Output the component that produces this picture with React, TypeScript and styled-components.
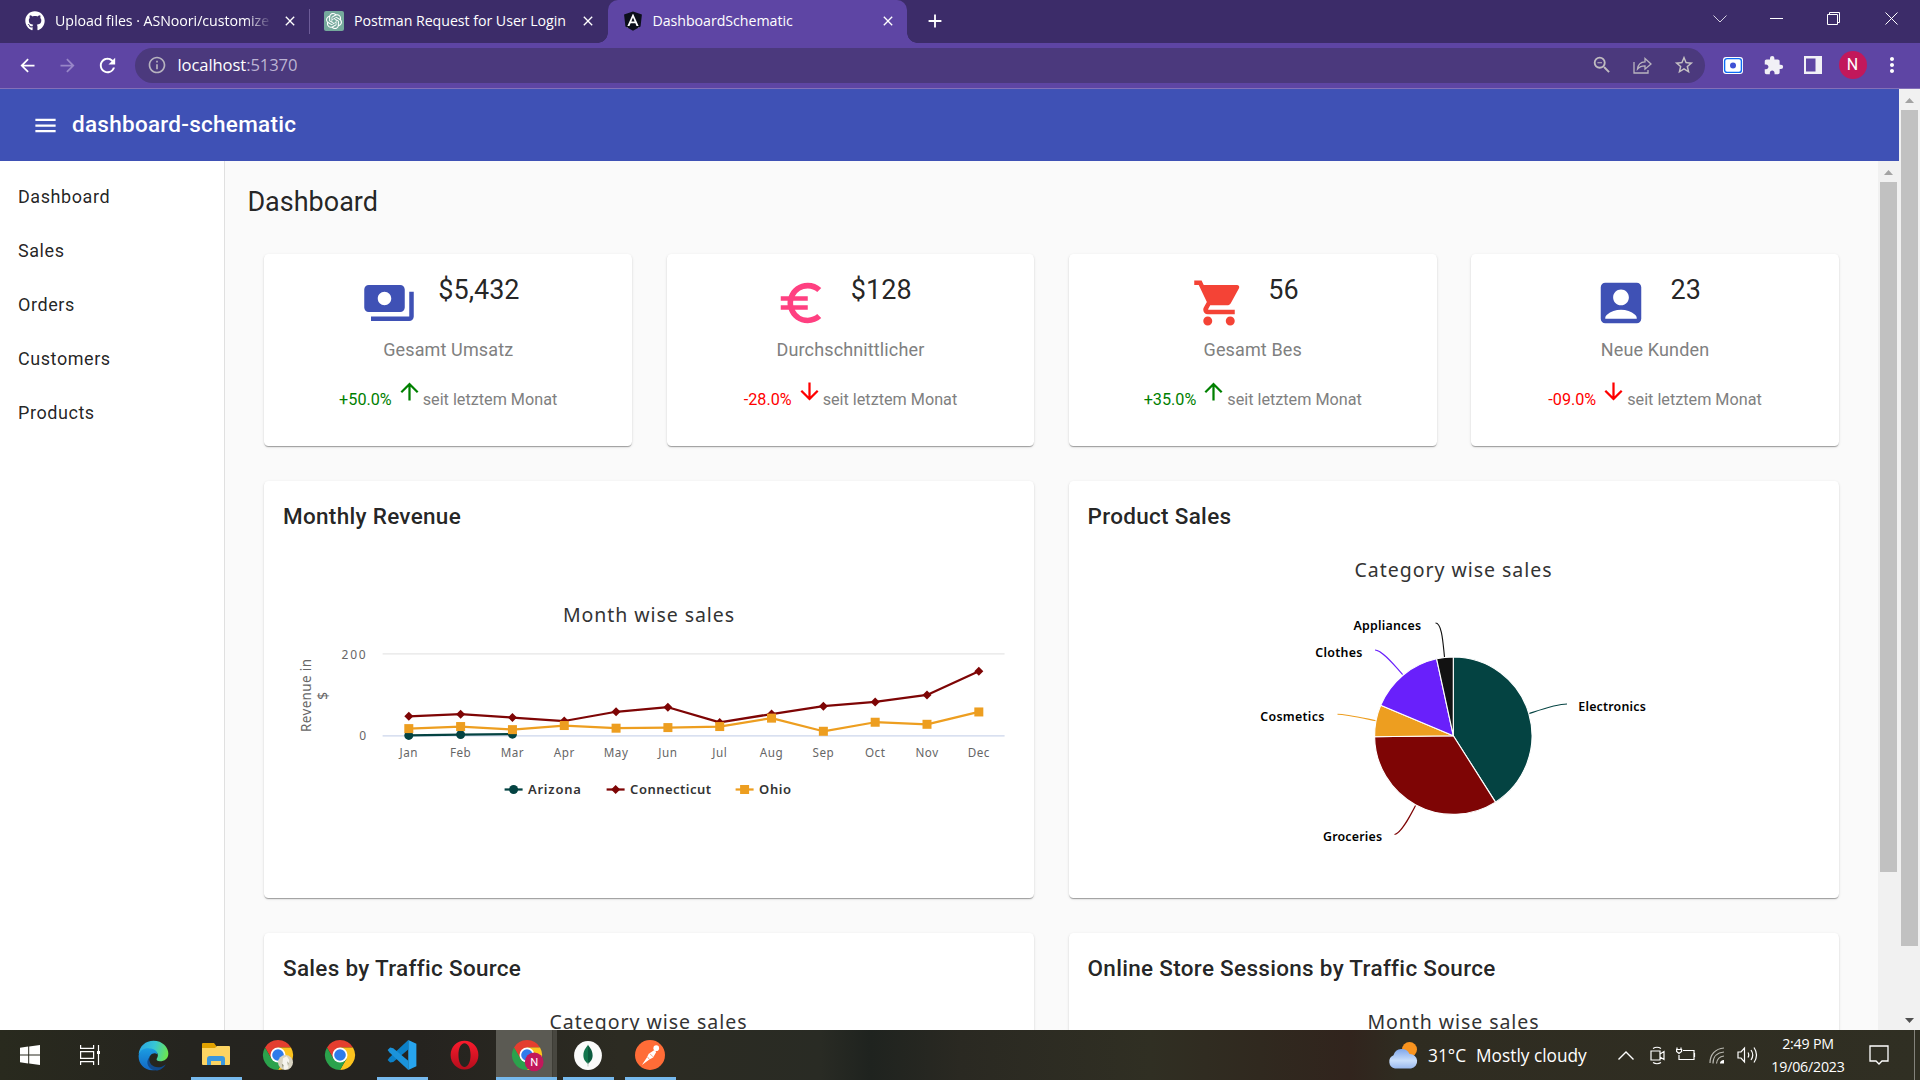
import React from "react";
import styled, { createGlobalStyle } from "styled-components";
import {
  MdAccountBox,
  MdArrowBack,
  MdArrowDownward,
  MdArrowForward,
  MdArrowUpward,
  MdClose,
  MdEuroSymbol,
  MdExtension,
  MdInfoOutline,
  MdMenu,
  MdMoreVert,
  MdPayments,
  MdRefresh,
  MdShoppingCart,
  MdStarBorder,
  MdZoomOut,
  MdAdd,
} from "react-icons/md";
import { FaAngular, FaGithub } from "react-icons/fa";
import { SiOpenai } from "react-icons/si";

const uiFont = `"Segoe UI", "Open Sans", "Noto Sans", sans-serif`;
const chartFont = `"Lucida Grande", "Lucida Sans Unicode", "Noto Sans", sans-serif`;

const GlobalStyle = createGlobalStyle`
  * { box-sizing: border-box; }
  html, body { margin: 0; padding: 0; overflow: hidden; background: #fafafa; }
  svg { display: block; flex: none; }
`;

const Screen = styled.div`
  width: 1920px;
  height: 1080px;
  display: flex;
  flex-direction: column;
  overflow: hidden;
  font-family: Roboto, "Helvetica Neue", sans-serif;
  color: rgba(0, 0, 0, 0.87);
`;

/* ---------- Browser frame ---------- */

const TabStrip = styled.div`
  height: 43px;
  flex: none;
  display: flex;
  background: #3c2c69;
  color: #fff;
  font-family: ${uiFont};
`;

const Tab = styled.div<{ $width: number; $pad: number; $gap: number }>`
  width: ${(p) => p.$width}px;
  padding-left: ${(p) => p.$pad}px;
  display: flex;
  align-items: center;
  gap: ${(p) => p.$gap}px;
  position: relative;
  padding-bottom: 1px;
`;

const ActiveTab = styled(Tab)`
  background: #5e45a4;
  border-radius: 10px 10px 0 0;
  &::before,
  &::after {
    content: "";
    position: absolute;
    bottom: 0;
    width: 10px;
    height: 10px;
  }
  &::before {
    left: -10px;
    background: radial-gradient(circle at 0 0, transparent 9.5px, #5e45a4 10px);
  }
  &::after {
    right: -10px;
    background: radial-gradient(circle at 100% 0, transparent 9.5px, #5e45a4 10px);
  }
`;

const TabTitle = styled.div<{ $width: number; $fade?: boolean }>`
  width: ${(p) => p.$width}px;
  font-size: 14.2px;
  line-height: 20px;
  letter-spacing: -0.04px;
  white-space: nowrap;
  overflow: hidden;
  ${(p) => p.$fade && "mask-image: linear-gradient(90deg, #000 88%, transparent);"}
`;

const Separator = styled.div`
  width: 1px;
  height: 25px;
  margin-top: 9px;
  background: #6d5c98;
`;

const GptBadge = styled.div`
  width: 20px;
  height: 20px;
  border-radius: 2px;
  background: #75a99c;
  display: flex;
  align-items: center;
  justify-content: center;
`;

const AngularBadge = styled.div`
  width: 20px;
  height: 22px;
  display: flex;
  align-items: center;
  justify-content: center;
  color: #0c0f1b;
  background: linear-gradient(#fff, #fff) center / 12px 14px no-repeat;
`;

const WindowControls = styled.div`
  margin-left: auto;
  display: flex;
  align-items: center;
  padding-bottom: 6px;
`;

const ControlSlot = styled.div<{ $width: number }>`
  width: ${(p) => p.$width}px;
  flex: none;
  display: flex;
  align-items: center;
  justify-content: center;
`;

const Toolbar = styled.div`
  height: 46px;
  flex: none;
  display: flex;
  align-items: center;
  padding: 0 0 1px 7px;
  background: #5e45a4;
  border-bottom: 1px solid #8370b8;
  color: #fff;
  font-family: ${uiFont};
`;

const Omnibox = styled.div`
  width: 1570px;
  height: 35px;
  flex: none;
  margin-left: 7px;
  padding: 0 1px 0 12px;
  border-radius: 18px;
  background: #4b397d;
  display: flex;
  align-items: center;
`;

const Address = styled.div`
  margin-left: 10.5px;
  flex: 1;
  font-size: 16.6px;
  line-height: 22px;
  letter-spacing: -0.1px;
  span {
    color: #bcb3d3;
  }
`;

const Avatar = styled.div`
  width: 28px;
  height: 28px;
  border-radius: 50%;
  background: #c2185b;
  font: 16px/28px Roboto, sans-serif;
  text-align: center;
`;

/* ---------- Page ---------- */

const Viewport = styled.div`
  height: 941px;
  flex: none;
  display: flex;
  overflow: hidden;
`;

const Page = styled.div`
  width: 1899px;
  display: flex;
  flex-direction: column;
`;

const AppBar = styled.header`
  height: 72px;
  flex: none;
  padding-left: 31.5px;
  display: flex;
  align-items: center;
  gap: 13.5px;
  background: #3f51b5;
  color: #fff;
  font-size: 22.5px;
  font-weight: 500;
  letter-spacing: 0.27px;
  span {
    padding-bottom: 2px;
  }
`;

const Body = styled.div`
  flex: 1;
  display: flex;
  min-height: 0;
`;

const SideNav = styled.nav`
  width: 225px;
  flex: none;
  padding-top: 9px;
  background: #fff;
  border-right: 1px solid #e0e0e0;
`;

const NavItem = styled.div`
  height: 54px;
  padding-left: 18px;
  font-size: 18px;
  line-height: 54px;
  letter-spacing: 0.56px;
`;

const Content = styled.main`
  flex: 1;
  padding: 21px 39px 0 39.4px;
  background: #fafafa;
  overflow: hidden;
`;

const PageTitle = styled.h1`
  margin: 0 0 32px -17px;
  font-size: 27px;
  line-height: 40px;
  font-weight: 400;
`;

const Grid = styled.div`
  display: grid;
  grid-template-columns: repeat(4, 367.6px);
  grid-template-rows: 192px 417px 417px;
  column-gap: 34.7px;
  row-gap: 35px;
`;

const Card = styled.section<{ $span?: number }>`
  grid-column: span ${(p) => p.$span ?? 1};
  background: #fff;
  border-radius: 4.5px;
  padding: 18px;
  box-shadow: 0 2px 1px -1px rgba(0, 0, 0, 0.2), 0 1px 1px rgba(0, 0, 0, 0.14),
    0 1px 3px rgba(0, 0, 0, 0.12);
`;

const StatCard = styled(Card)`
  display: flex;
  flex-direction: column;
  align-items: center;
`;

const StatHead = styled.div<{ $color: string }>`
  display: flex;
  gap: 22.5px;
  height: 58px;
  padding-right: 15px;
  svg {
    margin-top: 4px;
    color: ${(p) => p.$color};
  }
`;

const StatValue = styled.div`
  font-size: 27px;
  line-height: 36px;
`;

const StatLabel = styled.div`
  margin-top: 8px;
  font-size: 18px;
  line-height: 24px;
  letter-spacing: 0.13px;
  color: #808080;
`;

const StatTrend = styled.div<{ $up: boolean }>`
  margin-top: 16px;
  display: flex;
  font-size: 16.2px;
  line-height: 24px;
  color: #808080;
  span {
    margin-top: 10px;
  }
  span:first-child,
  svg {
    color: ${(p) => (p.$up ? "green" : "red")};
  }
  svg {
    margin-left: 4px;
  }
`;

const CardTitle = styled.h2`
  margin: 0 0 0 0.6px;
  font-size: 22.5px;
  line-height: 34px;
  font-weight: 500;
  letter-spacing: 0.3px;
`;

const ChartSvg = styled.svg`
  font-family: ${chartFont};
`;

/* ---------- Scroll bars ---------- */

const Track = styled.div`
  width: 21px;
  flex: none;
  display: flex;
  flex-direction: column;
  align-items: center;
  background: #f1f1f1;
`;

const ArrowBox = styled.div`
  height: 21px;
  display: flex;
  align-items: center;
  padding-top: 2px;
`;

const Thumb = styled.div<{ $height: number }>`
  width: 17px;
  height: ${(p) => p.$height}px;
  background: #c1c1c1;
`;

const Spacer = styled.div`
  flex: 1;
`;

const ScrollArrow = ({ down, color }: { down?: boolean; color: string }) => (
  <svg width="9" height="5" viewBox="0 0 9 5">
    <path d={down ? "M0 0h9L4.500 5z" : "M0 5h9L4.500 0z"} fill={color} />
  </svg>
);

/* ---------- Taskbar ---------- */

const Taskbar = styled.footer`
  height: 50px;
  flex: none;
  display: flex;
  color: #fff;
  font-family: ${uiFont};
  background: linear-gradient(
    90deg,
    #292a1e 0,
    #25241f 190px,
    #25231f 420px,
    #2c2b22 620px,
    #292b24 820px,
    #1f231f 870px,
    #2a2922 960px,
    #302f23 1150px,
    #30291f 1260px,
    #31241d 1350px,
    #2f2c21 1400px,
    #302f23 1920px
  );
`;

const TaskSlot = styled.div<{ $width?: number; $run?: boolean; $active?: boolean }>`
  width: ${(p) => p.$width ?? 62}px;
  height: 50px;
  display: flex;
  align-items: center;
  justify-content: center;
  ${(p) =>
    p.$run &&
    "background: linear-gradient(#76b9ed, #76b9ed) center bottom / 51px 3px no-repeat;"}
  ${(p) =>
    p.$active &&
    `background: linear-gradient(#76b9ed, #76b9ed) left bottom / 61px 3px no-repeat,
      linear-gradient(90deg, #5b5a53 0 56px, #3e3d36 56px 57px, #484740 57px 61px, transparent 61px);`}
`;

const Tray = styled.div`
  margin-left: auto;
  display: flex;
  align-items: center;
`;

const TraySlot = styled.div<{ $width: number }>`
  width: ${(p) => p.$width}px;
  display: flex;
  align-items: center;
  justify-content: center;
`;

const Weather = styled.div`
  width: 216px;
  display: flex;
  align-items: center;
  font-size: 17.3px;
  white-space: nowrap;
  svg {
    margin-right: 10px;
  }
  span + span {
    margin-left: 10px;
  }
`;

const Clock = styled.div`
  width: 84px;
  margin-right: 7px;
  text-align: center;
  font-size: 14.2px;
  line-height: 23px;
  letter-spacing: -0.2px;
  padding-bottom: 1px;
`;

const ShowDesktop = styled.div`
  width: 6px;
  height: 50px;
  border-left: 1px solid #83827b;
`;

/* ---------- Task icons ---------- */

const ChromeIcon = ({ badge }: { badge?: "user" | "N" }) => (
  <svg width="30" height="30" viewBox="0 0 48 48" overflow="visible">
    <path d="M24 24V12H44.800A24 24 0 0 0 3.200 12L13.600 30z" fill="#e43e2f" />
    <path d="M24 24V12H44.800A24 24 0 0 1 24 48L34.400 30z" fill="#fcc31e" />
    <path d="M24 24L34.400 30 24 48A24 24 0 0 1 3.200 12L13.600 30z" fill="#2ba24c" />
    <circle cx="24" cy="24" r="12" fill="#fff" />
    <circle cx="24" cy="24" r="9.300" fill="#2f7bea" />
    {badge === "user" && (
      <>
        <circle cx="36" cy="36" r="12" fill="#d9d4c3" />
        <path d="M32 29l6-3 4 6-2 14-6 1-3-8z" fill="#f6f4ee" />
        <path d="M30 38l3 2-1 5zM39 34l2 3-1 5z" fill="#8a8a70" />
      </>
    )}
    {badge === "N" && (
      <>
        <circle cx="35.500" cy="35" r="15" fill="#c2185b" />
        <text x="35.500" y="42" fontSize="18" fontFamily="Roboto, sans-serif" textAnchor="middle" fill="#fff">
          N
        </text>
      </>
    )}
  </svg>
);

const EdgeIcon = () => (
  <svg width="31" height="31" viewBox="0 0 48 48">
    <defs>
      <linearGradient id="edgeTop" x1="0" y1="0.300" x2="1" y2="0.500">
        <stop offset="0" stopColor="#2aa5e2" />
        <stop offset="0.500" stopColor="#37c6d6" />
        <stop offset="1" stopColor="#6be54f" />
      </linearGradient>
      <linearGradient id="edgeLeft" x1="0" y1="0" x2="0" y2="1">
        <stop offset="0" stopColor="#1b9de2" />
        <stop offset="1" stopColor="#1367c4" />
      </linearGradient>
    </defs>
    <path d="M1 22C2 9 12 1 24 1c14 0 23 10 23 20 0 8-6 12-13 12-4 0-6-2-5-4 5-7-1-13-8-13C10 16 3 19 1 22z" fill="url(#edgeTop)" />
    <path d="M1 24c1-8 9-12 17-11 7 0 12 4 12 9-6-4-13 1-13 9 0 7 5 13 11 15C12 50 0 38 1 24z" fill="url(#edgeLeft)" />
    <path d="M18 26c-3 11 7 18 16 16 4-1 8-3 9-5-2 6-10 11-17 10-9-1-16-12-8-21z" fill="#114a8c" />
  </svg>
);

const FolderIcon = () => (
  <svg width="30" height="30" viewBox="0 0 30 30">
    <path d="M0 4q0-1 1-1h11l3 4v4H0z" fill="#e0a100" />
    <path d="M0 8h13l2-2h12q1 0 1 1v17q0 1-1 1H1q-1 0-1-1z" fill="#fcd462" />
    <path d="M5 25v-6q0-3 3-3h12q3 0 3 3v6h-4v-4h-10v4z" fill="#3a97dd" />
  </svg>
);

const CodeIcon = () => (
  <svg width="30" height="30" viewBox="0 0 48 48">
    <path d="M34 0L47 6V42L34 48z" fill="#27a4ee" />
    <path d="M34 0L4 28 1 32l4 4 5-1L34 15z" fill="#0b80c8" />
    <path d="M34 48L4 20 1 16l4-4 5 1L34 33z" fill="#1b93db" />
  </svg>
);

const OperaIcon = () => (
  <svg width="29" height="30" viewBox="0 0 48 48" preserveAspectRatio="none">
    <defs>
      <linearGradient id="opera" x1="0" y1="0" x2="0" y2="1">
        <stop offset="0" stopColor="#fb1b2d" />
        <stop offset="1" stopColor="#b40d1c" />
      </linearGradient>
    </defs>
    <path
      fillRule="evenodd"
      fill="url(#opera)"
      d="M24 1a23 23 0 1 1 0 46a23 23 0 1 1 0-46zM24 5c-6 0-10 8-10 19s4 19 10 19 10-8 10-19S30 5 24 5z"
    />
  </svg>
);

const MongoIcon = () => (
  <svg width="28" height="29" viewBox="0 0 48 50">
    <ellipse cx="24" cy="25" rx="24" ry="25" fill="#fafbfa" />
    <path d="M24 6c1 4 8 8 8 19 0 8-5 11-7 14h-1z" fill="#0b5b3e" />
    <path d="M24 6c-1 4-8 8-8 19 0 8 5 11 7 14h1z" fill="#13764d" />
    <path d="M23.500 36h1v8h-1z" fill="#8ca79a" />
  </svg>
);

const PostmanIcon = () => (
  <svg width="30" height="30" viewBox="0 0 48 48">
    <circle cx="24" cy="24" r="24" fill="#ff6c37" />
    <circle cx="34" cy="13" r="4.500" fill="#fff" />
    <path d="M31 16l3 3-5 9-6 3-12 9 8-12 3-6z" fill="#fff" />
    <path d="M24 22l5 5M20 27l3 4" stroke="#ff6c37" strokeWidth="1" />
  </svg>
);

/* ---------- Charts ---------- */

const teal = "#044342";
const maroon = "#7e0505";
const orange = "#ed9e20";
const months = ["Jan", "Feb", "Mar", "Apr", "May", "Jun", "Jul", "Aug", "Sep", "Oct", "Nov", "Dec"];

const series = [
  { name: "Arizona", color: teal, data: [1, 3, 4] },
  { name: "Connecticut", color: maroon, data: [47.500, 52.500, 44.500, 36, 58.500, 69.500, 32.500, 53, 72, 82.500, 99.500, 157] },
  { name: "Ohio", color: orange, data: [17.500, 22.500, 15, 25, 18.500, 20, 22.500, 43, 11, 33, 28, 58] },
];

const px = (i: number) => 126.800 + i * 51.820;
const py = (v: number) => 155.800 - (v * 82.200) / 200;

const Marker = ({ kind, x, y }: { kind: number; x: number; y: number }) => {
  if (kind === 0) return <circle cx={x} cy={y} r={4.500} fill={teal} />;
  if (kind === 1) return <path d={`M${x} ${y - 4.500}l4.500 4.500l-4.500 4.500l-4.500-4.500z`} fill={maroon} />;
  return <rect x={x - 4.500} y={y - 4.500} width={9} height={9} fill={orange} />;
};

const legend = [
  { x: 222.600, text: 245.900, width: 53 },
  { x: 324.600, text: 348.100, width: 81 },
  { x: 453.600, text: 477.100, width: 32 },
];

const LineChart = () => (
  <ChartSvg width="731" height="260" viewBox="0 0 731 260">
    <text x="281" y="42" fontSize="19.500" fill="#333" textLength="171">
      Month wise sales
    </text>
    <path d="M100.600 73.800H722.600" stroke="#e6e6e6" strokeWidth="1.200" />
    <path d="M100.600 155.900H722.600" stroke="#ccd6eb" strokeWidth="1.300" />
    <g fill="#666" fontSize="12">
      <text x="59.600" y="79" textLength="24">200</text>
      <text x="84" y="160" textAnchor="end">0</text>
      {months.map((m, i) => (
        <text key={m} x={px(i)} y="177" fontSize="11.700" letterSpacing="0.500" textAnchor="middle">
          {m}
        </text>
      ))}
      <text transform="translate(29 152) rotate(-90)" fontSize="13.500" textLength="73">
        Revenue in
      </text>
      <text transform="translate(45.500 116) rotate(-90)" fontSize="13.500" textAnchor="middle">
        $
      </text>
    </g>
    {series.map((s, k) => (
      <g key={s.name}>
        <polyline
          points={s.data.map((v, i) => `${px(i)},${py(v)}`).join(" ")}
          fill="none"
          stroke={s.color}
          strokeWidth="2.250"
          strokeLinejoin="round"
        />
        {s.data.map((v, i) => (
          <Marker key={i} kind={k} x={px(i)} y={py(v)} />
        ))}
        <path d={`M${legend[k].x} 209.500h18`} stroke={s.color} strokeWidth="2.250" />
        <Marker kind={k} x={legend[k].x + 9} y={209.500} />
        <text x={legend[k].text} y="214" fontSize="13" fontWeight="600" fill="#333" textLength={legend[k].width}>
          {s.name}
        </text>
      </g>
    ))}
  </ChartSvg>
);

const slices = [
  { name: "Electronics", value: 41, color: teal, x: 491.300, y: 171, width: 67.500, line: "M441.700 173.700C450 171 469 164 480 164" },
  { name: "Groceries", value: 33.800, color: maroon, x: 236, y: 301, width: 59, line: "M328.700 265.300C323 276 314 294 307.500 294.500" },
  { name: "Cosmetics", value: 6.500, color: orange, x: 173.300, y: 181, width: 64, line: "M250.500 174.300C259 174.300 273 177.500 289 180.700" },
  { name: "Clothes", value: 15.300, color: "#6920fb", x: 228.300, y: 117, width: 47, line: "M288 110C294 110 304 121 315.700 134.700" },
  { name: "Appliances", value: 3.400, color: "#121212", x: 266.500, y: 90, width: 67.500, line: "M348.500 83C355 83 356 103 357.500 117" },
];

const PieChart = () => {
  const cx = 366.300;
  const cy = 195.700;
  const r = 78.700;
  let total = 0;
  const at = (v: number) => {
    const a = (v / 100) * Math.PI * 2;
    return `${cx + r * Math.sin(a)} ${cy - r * Math.cos(a)}`;
  };
  return (
    <ChartSvg width="731" height="345" viewBox="0 0 731 345">
      <text x="267.500" y="37" fontSize="19.500" fill="#333" textLength="197">
        Category wise sales
      </text>
      {slices.map((s) => {
        const from = total;
        total += s.value;
        return (
          <g key={s.name}>
            <path d={s.line} fill="none" stroke={s.color} strokeWidth="1.125" />
            <path
              d={`M${cx} ${cy}L${at(from)}A${r} ${r} 0 0 1 ${at(total)}Z`}
              fill={s.color}
              stroke="#fff"
              strokeWidth="1.125"
              strokeLinejoin="round"
            />
            <text x={s.x} y={s.y} fontSize="12.400" fontWeight="600" fill="#000" textLength={s.width}>
              {s.name}
            </text>
          </g>
        );
      })}
    </ChartSvg>
  );
};

const CutTitle = ({ text, x, width }: { text: string; x: number; width: number }) => (
  <ChartSvg width="731" height="60" viewBox="0 0 731 60">
    <text x={x} y="37" fontSize="19.500" fill="#333" textLength={width}>
      {text}
    </text>
  </ChartSvg>
);

const ChartOffset = styled.div<{ $top: number }>`
  padding-top: ${(p) => p.$top}px;
`;

const stats = [
  { icon: MdPayments, color: "#3f51b5", value: "$5,432", label: "Gesamt Umsatz", delta: "+50.0%", up: true },
  { icon: MdEuroSymbol, color: "#ff4081", value: "$128", label: "Durchschnittlicher", delta: "-28.0%", up: false },
  { icon: MdShoppingCart, color: "#f44336", value: "56", label: "Gesamt Bes", delta: "+35.0%", up: true },
  { icon: MdAccountBox, color: "#3f51b5", value: "23", label: "Neue Kunden", delta: "-09.0%", up: false },
];

export default function App() {
  return (
    <Screen>
      <GlobalStyle />
      <TabStrip>
        <Tab $width={309} $pad={25} $gap={10}>
          <FaGithub size={20} />
          <TabTitle $width={217} $fade>
            Upload files · ASNoori/customize
          </TabTitle>
          <MdClose size={16} />
        </Tab>
        <Separator />
        <Tab $width={298} $pad={14} $gap={10}>
          <GptBadge>
            <SiOpenai size={16} />
          </GptBadge>
          <TabTitle $width={216}>Postman Request for User Login</TabTitle>
          <MdClose size={16} />
        </Tab>
        <ActiveTab $width={299} $pad={15} $gap={9.500}>
          <AngularBadge>
            <FaAngular size={22} />
          </AngularBadge>
          <TabTitle $width={218}>DashboardSchematic</TabTitle>
          <MdClose size={16} />
        </ActiveTab>
        <Tab $width={60} $pad={17} $gap={0}>
          <MdAdd size={22} />
        </Tab>
        <WindowControls>
          <ControlSlot $width={57}>
            <svg width="14" height="8" viewBox="0 0 14 8" fill="none" stroke="#d5d0e1">
              <path d="M.5.5L7 7 13.500.5" />
            </svg>
          </ControlSlot>
          <ControlSlot $width={57}>
            <svg width="13" height="1" viewBox="0 0 13 1">
              <rect width="13" height="1" fill="#fff" />
            </svg>
          </ControlSlot>
          <ControlSlot $width={57}>
            <svg width="13" height="13" viewBox="0 0 13 13" fill="none" stroke="#fff">
              <path d="M.5 2.500h10v10H.5zM2.500 2.500v-2h10v10h-2" />
            </svg>
          </ControlSlot>
          <ControlSlot $width={58}>
            <svg width="13" height="13" viewBox="0 0 13 13" stroke="#fff">
              <path d="M.5.5l12 12M12.500.5l-12 12" />
            </svg>
          </ControlSlot>
        </WindowControls>
      </TabStrip>

      <Toolbar>
        <ControlSlot $width={40}>
          <MdArrowBack size={21} />
        </ControlSlot>
        <ControlSlot $width={40}>
          <MdArrowForward size={21} color="#9886c8" />
        </ControlSlot>
        <ControlSlot $width={41}>
          <MdRefresh size={23} />
        </ControlSlot>
        <Omnibox>
          <MdInfoOutline size={20} color="#b7b3bf" />
          <Address>
            localhost<span>:51370</span>
          </Address>
          <ControlSlot $width={41}>
            <MdZoomOut size={22} color="#c0bcc0" />
          </ControlSlot>
          <ControlSlot $width={41}>
            <svg width="19" height="17" viewBox="0 0 19 17" fill="none" stroke="#b9b4bf" strokeWidth="1.300">
              <path d="M1 5v11h14v-3" />
              <path d="M4.500 12C5 7 8 5 12 4.800V1.500L18 7l-6 5.200V8.800C9 8.800 6.500 9.500 4.500 12z" />
            </svg>
          </ControlSlot>
          <ControlSlot $width={41}>
            <MdStarBorder size={22} color="#c5c1c4" />
          </ControlSlot>
        </Omnibox>
        <ControlSlot $width={55}>
          <svg width="20" height="17" viewBox="0 0 20 17">
            <rect width="20" height="17" rx="3" fill="#fff" />
            <rect x="1.600" y="1.600" width="16.800" height="13.800" rx="2.500" fill="#fff" stroke="#0b6cf5" strokeWidth="1.400" />
            <circle cx="10" cy="8.500" r="3" fill="#3f51d5" />
          </svg>
        </ControlSlot>
        <ControlSlot $width={27}>
          <MdExtension size={21} color="#f1f0f6" />
        </ControlSlot>
        <ControlSlot $width={51}>
          <svg width="18" height="18" viewBox="0 0 18 18" fill="#f1f0f6">
            <path fillRule="evenodd" d="M0 0h18v18H0zM2 2.500v13h9.500v-13z" />
          </svg>
        </ControlSlot>
        <ControlSlot $width={29}>
          <Avatar>N</Avatar>
        </ControlSlot>
        <ControlSlot $width={50}>
          <MdMoreVert size={24} />
        </ControlSlot>
      </Toolbar>

      <Viewport>
        <Page>
          <AppBar>
            <MdMenu size={27} />
            <span>dashboard-schematic</span>
          </AppBar>
          <Body>
            <SideNav>
              {["Dashboard", "Sales", "Orders", "Customers", "Products"].map((n) => (
                <NavItem key={n}>{n}</NavItem>
              ))}
            </SideNav>
            <Content>
              <PageTitle>Dashboard</PageTitle>
              <Grid>
                {stats.map((s) => (
                  <StatCard key={s.label}>
                    <StatHead $color={s.color}>
                      <s.icon size={54} />
                      <StatValue>{s.value}</StatValue>
                    </StatHead>
                    <StatLabel>{s.label}</StatLabel>
                    <StatTrend $up={s.up}>
                      <span>{s.delta}</span>
                      {s.up ? <MdArrowUpward size={27} /> : <MdArrowDownward size={27} />}
                      <span>seit letztem Monat</span>
                    </StatTrend>
                  </StatCard>
                ))}
                <Card $span={2}>
                  <CardTitle>Monthly Revenue</CardTitle>
                  <ChartOffset $top={47}>
                    <LineChart />
                  </ChartOffset>
                </Card>
                <Card $span={2}>
                  <CardTitle>Product Sales</CardTitle>
                  <ChartOffset $top={7}>
                    <PieChart />
                  </ChartOffset>
                </Card>
                <Card $span={2}>
                  <CardTitle>Sales by Traffic Source</CardTitle>
                  <ChartOffset $top={7}>
                    <CutTitle text="Category wise sales" x={267.500} width={197} />
                  </ChartOffset>
                </Card>
                <Card $span={2}>
                  <CardTitle>Online Store Sessions by Traffic Source</CardTitle>
                  <ChartOffset $top={7}>
                    <CutTitle text="Month wise sales" x={280.500} width={171} />
                  </ChartOffset>
                </Card>
              </Grid>
            </Content>
            <Track>
              <ArrowBox>
                <ScrollArrow color="#a3a3a3" />
              </ArrowBox>
              <Thumb $height={690} />
            </Track>
          </Body>
        </Page>
        <Track>
          <ArrowBox>
            <ScrollArrow color="#a3a3a3" />
          </ArrowBox>
          <Thumb $height={836} />
          <Spacer />
          <ArrowBox>
            <ScrollArrow down color="#505050" />
          </ArrowBox>
        </Track>
      </Viewport>

      <Taskbar>
        <TaskSlot $width={60}>
          <svg width="20" height="20" viewBox="0 0 20 20" fill="#fff">
            <path d="M0 2.800L8.200 1.600V9.500H0zM9.200 1.400L20 0V9.500H9.200zM0 10.500H8.200V18.400L0 17.200zM9.200 10.500H20V20L9.200 18.600z" />
          </svg>
        </TaskSlot>
        <TaskSlot $width={60}>
          <svg width="21" height="20" viewBox="0 0 21 20" fill="none" stroke="#fff" strokeWidth="1.200">
            <path d="M.6 0v3.400h13V0M.6 20v-3.400h13V20M.6 6.600h13v6.800H.6zM18.500 0v20" />
            <path d="M17 6h3v3h-3z" fill="#fff" stroke="none" />
          </svg>
        </TaskSlot>
        <TaskSlot $width={67}>
          <EdgeIcon />
        </TaskSlot>
        <TaskSlot $width={59} $run>
          <FolderIcon />
        </TaskSlot>
        <TaskSlot $width={64}>
          <ChromeIcon badge="user" />
        </TaskSlot>
        <TaskSlot $width={60}>
          <ChromeIcon />
        </TaskSlot>
        <TaskSlot $width={64} $run>
          <CodeIcon />
        </TaskSlot>
        <TaskSlot $width={60}>
          <OperaIcon />
        </TaskSlot>
        <TaskSlot $width={2} />
        <TaskSlot $width={61} $active>
          <ChromeIcon badge="N" />
        </TaskSlot>
        <TaskSlot $width={62} $run>
          <MongoIcon />
        </TaskSlot>
        <TaskSlot $width={62} $run>
          <PostmanIcon />
        </TaskSlot>
        <Tray>
          <Weather>
            <svg width="30" height="27" viewBox="0 0 30 27">
              <defs>
                <linearGradient id="cloud" x1="0" y1="0" x2="0" y2="1">
                  <stop offset="0" stopColor="#7fa6ea" />
                  <stop offset="0.600" stopColor="#c9defb" />
                  <stop offset="1" stopColor="#9ab9ee" />
                </linearGradient>
              </defs>
              <circle cx="21.500" cy="7.500" r="7.500" fill="#f8931f" />
              <path d="M7 26.500a7 7 0 0 1-1.500-13.300A8.500 8.500 0 0 1 21.500 12a7.300 7.300 0 0 1 1.500 14.500z" fill="url(#cloud)" />
            </svg>
            <span>31°C</span>
            <span>Mostly cloudy</span>
          </Weather>
          <TraySlot $width={44}>
            <svg width="16" height="9" viewBox="0 0 16 9" fill="none" stroke="#fff" strokeWidth="1.400">
              <path d="M.5 8.500L8 1l7.500 7.500" />
            </svg>
          </TraySlot>
          <TraySlot $width={18}>
            <svg width="15" height="19" viewBox="0 0 15 19" fill="none" stroke="#fff" strokeWidth="1.200">
              <path d="M1 5h9v9H1zM10 8l4-2.500v8L10 11M3 2.500Q7 0 11 2.500M3 16.500q4 2.500 8 0" />
            </svg>
          </TraySlot>
          <TraySlot $width={40}>
            <svg width="20" height="16" viewBox="0 0 20 16" fill="none" stroke="#fff" strokeWidth="1.200">
              <path d="M7 3.500h11v9H3V8M18.500 6v4M1 .5v2M5 .5v2M.6 2.500h5v2L3 6.500.6 4.500z" />
            </svg>
          </TraySlot>
          <TraySlot $width={22}>
            <svg width="16" height="17" viewBox="0 0 16 17" fill="none" stroke="#b9b8b1" strokeWidth="1.200">
              <path d="M1 16C1 8 6 1.500 15 1M4 16.500C4 10 8 5.500 15 5M7.500 16.500C8 12 10.500 9.500 15 9" />
              <path d="M11 16.500c0-2 1.500-3.500 4-3.500v3.500z" fill="#fff" stroke="none" />
            </svg>
          </TraySlot>
          <TraySlot $width={38}>
            <svg width="21" height="18" viewBox="0 0 21 18" fill="none" stroke="#fff" strokeWidth="1.200">
              <path d="M1 6h3l3.500-4v14L4 12H1zM11 6.500q1.500 2.500 0 5M14 4q3.500 5 0 10M17 1.500q5 7.500 0 15" />
            </svg>
          </TraySlot>
          <Clock>
            2:49 PM
            <br />
            19/06/2023
          </Clock>
          <TraySlot $width={44}>
            <svg width="20" height="20" viewBox="0 0 20 20" fill="none" stroke="#fff" strokeWidth="1.300">
              <path d="M1 1h18v15h-6l-3 3-3-3H1z" />
            </svg>
          </TraySlot>
          <TraySlot $width={13} />
          <ShowDesktop />
        </Tray>
      </Taskbar>
    </Screen>
  );
}
